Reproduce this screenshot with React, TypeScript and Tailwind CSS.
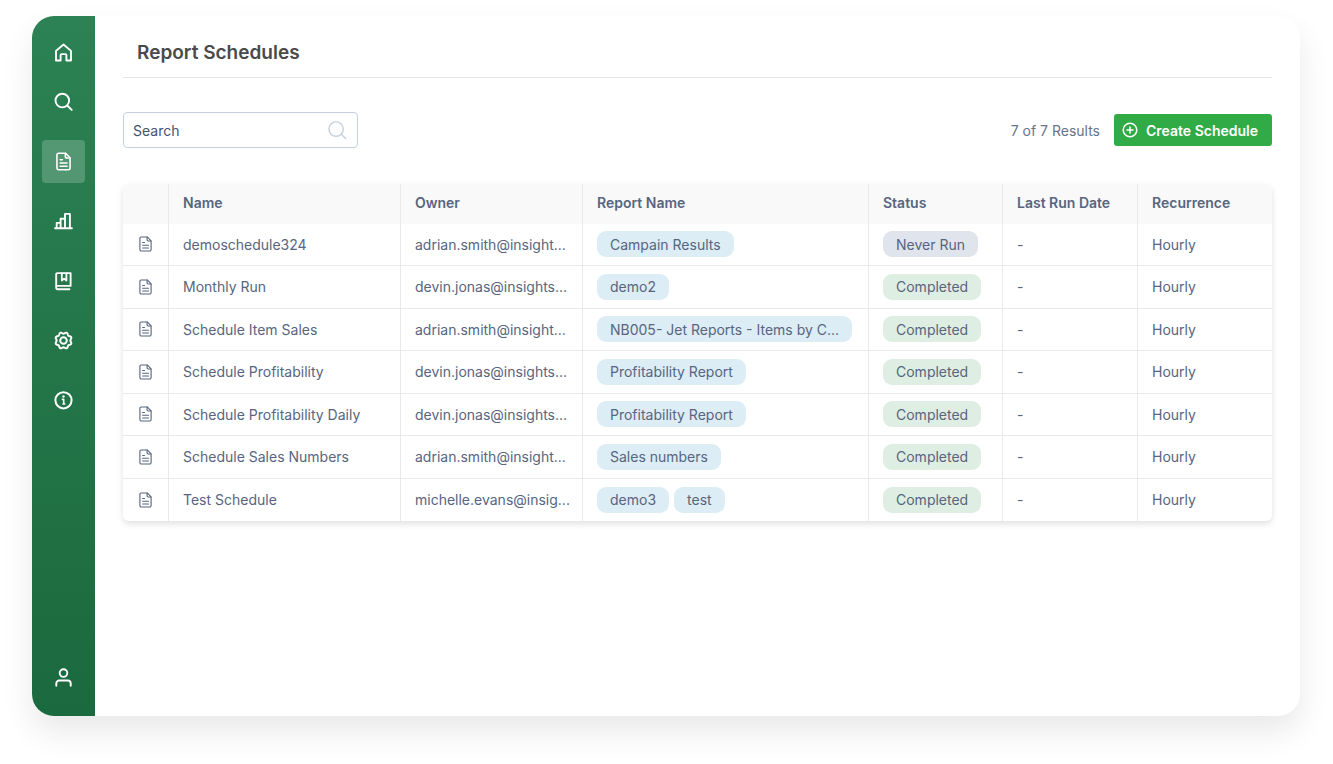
import type { ReactNode } from 'react';

type FileIconProps = { className?: string; stroke?: number };

function Svg({
  size = 'size-[19px]',
  stroke = 2,
  viewBox = '0.5 0.5 19 19',
  children,
}: {
  size?: string;
  stroke?: number;
  viewBox?: string;
  children: ReactNode;
}) {
  return (
    <svg
      className={`${size} shrink-0`}
      viewBox={viewBox}
      fill="none"
      stroke="currentColor"
      strokeWidth={stroke}
      strokeLinecap="round"
      strokeLinejoin="round"
      aria-hidden="true"
    >
      {children}
    </svg>
  );
}

function HomeIcon() {
  return (
    <Svg stroke={1.9}>
      <path d="M2.5 8.4 10 2l7.5 6.4v9.6h-4.6v-5.4a1 1 0 0 0-1-1H8.1a1 1 0 0 0-1 1V18H2.5z" />
    </Svg>
  );
}

function SearchIcon() {
  return (
    <Svg stroke={1.9}>
      <circle cx="8.8" cy="9.1" r="6.8" />
      <path d="m13.9 14.2 4.3 4.2" />
    </Svg>
  );
}

function FileIcon({ className = 'h-[19px] w-[15px]', stroke = 1.7 }: FileIconProps) {
  return (
    <svg
      className={`${className} shrink-0`}
      viewBox="0 0 16 20"
      fill="none"
      stroke="currentColor"
      strokeWidth={stroke}
      strokeLinecap="round"
      strokeLinejoin="round"
      aria-hidden="true"
    >
      <path d="M2.6 1.2h7.6L15 6v11a1.8 1.8 0 0 1-1.8 1.8H2.8A1.8 1.8 0 0 1 1 17V2.8a1.6 1.6 0 0 1 1.6-1.6z" />
      <path d="M10 1.4V5a1.2 1.2 0 0 0 1.2 1.2h3.6" />
      <path d="M4.4 8.1h2.4M4.4 11.6h7.4M4.4 15h7.4" />
    </svg>
  );
}

function ChartIcon() {
  return (
    <Svg stroke={1.9}>
      <path d="M1.6 16.8h16.8M3.2 16.7v-5.3h3.9v5.3M7.1 11.4V7.2h4.4v9.5M11.5 7.3V2.4h4.9v14.3" />
    </Svg>
  );
}

function BookIcon() {
  return (
    <Svg stroke={1.9}>
      <path d="M15.9 17.8H4.4a1.7 1.7 0 0 1-1.7-1.7V2.6a1 1 0 0 1 1-1h13.4v12.8H4.4" />
      <path d="M8.3 1.8v7.3l2.3-2 2.3 2V1.8" strokeWidth="1.8" />
    </Svg>
  );
}

const gearOutline = Array.from({ length: 96 }, (_, i) => {
  const angle = (i / 96) * Math.PI * 2;
  const radius = 7.6 - 0.75 * Math.cos(8 * angle);
  return `${(10 + radius * Math.cos(angle)).toFixed(2)},${(10 + radius * Math.sin(angle)).toFixed(2)}`;
}).join(' ');

function GearIcon() {
  return (
    <Svg stroke={2}>
      <polygon points={gearOutline} />
      <circle cx="10" cy="10" r="3.3" />
    </Svg>
  );
}

function InfoIcon() {
  return (
    <Svg>
      <circle cx="10" cy="9.8" r="8.1" />
      <path d="M8.9 8.9h1.3v4.5M9.4 13.5h1.8" strokeWidth="1.6" />
      <circle cx="10" cy="6" r="1.2" fill="currentColor" stroke="none" />
    </Svg>
  );
}

function UserIcon() {
  return (
    <Svg stroke={1.9}>
      <circle cx="10" cy="5.6" r="3.8" />
      <path d="M2.8 18.2v-2.3a2.9 2.9 0 0 1 2.9-2.9h8.6a2.9 2.9 0 0 1 2.9 2.9v2.3" />
    </Svg>
  );
}

function NavLink({ label, active, children }: { label: string; active?: boolean; children: ReactNode }) {
  return (
    <a
      href="#"
      aria-label={label}
      aria-current={active ? 'page' : undefined}
      className={`flex size-[43px] items-center justify-center rounded-[4px] ${active ? 'bg-white/20' : ''}`}
    >
      {children}
    </a>
  );
}

function Sidebar() {
  return (
    <nav
      aria-label="Main"
      className="flex w-[63px] shrink-0 flex-col items-center bg-linear-to-b from-[#2c8254] to-[#1b693e] pt-[15px] pb-[17px] text-white"
    >
      <div className="flex flex-col gap-1.5">
        <NavLink label="Home"><HomeIcon /></NavLink>
        <NavLink label="Search"><SearchIcon /></NavLink>
      </div>
      <div className="mt-[17px] flex h-[282px] flex-col justify-between">
        <NavLink label="Schedules" active><FileIcon /></NavLink>
        <NavLink label="Charts"><ChartIcon /></NavLink>
        <NavLink label="Library"><BookIcon /></NavLink>
        <NavLink label="Settings"><GearIcon /></NavLink>
        <NavLink label="Information"><InfoIcon /></NavLink>
      </div>
      <div className="mt-auto">
        <NavLink label="Account"><UserIcon /></NavLink>
      </div>
    </nav>
  );
}

const rows = [
  { name: 'demoschedule324', owner: 'adrian.smith@insight...', reports: ['Campain Results'], status: 'Never Run' },
  { name: 'Monthly Run', owner: 'devin.jonas@insights...', reports: ['demo2'], status: 'Completed' },
  { name: 'Schedule Item Sales', owner: 'adrian.smith@insight...', reports: ['NB005- Jet Reports - Items by C...'], status: 'Completed' },
  { name: 'Schedule Profitability', owner: 'devin.jonas@insights...', reports: ['Profitability Report'], status: 'Completed' },
  { name: 'Schedule Profitability Daily', owner: 'devin.jonas@insights...', reports: ['Profitability Report'], status: 'Completed' },
  { name: 'Schedule Sales Numbers', owner: 'adrian.smith@insight...', reports: ['Sales numbers'], status: 'Completed' },
  { name: 'Test Schedule', owner: 'michelle.evans@insig...', reports: ['demo3', 'test'], status: 'Completed' },
];

function Tag({ tone, children }: { tone: 'blue' | 'green' | 'gray'; children: ReactNode }) {
  const tones = { blue: 'bg-[#dcedf5]', green: 'bg-[#deeee2]', gray: 'bg-[#e0e4ed]' };
  return <span className={`flex h-[26px] items-center rounded-[9px] px-[13px] ${tones[tone]}`}>{children}</span>;
}

const cell = 'border-l border-[#e8e9ed] pl-3.5 pb-px text-left';

function ScheduleTable() {
  return (
    <div className="mt-9 overflow-hidden rounded-md shadow-[0_3px_6px_rgba(0,0,0,0.12)]">
      <table className="w-full table-fixed border-separate border-spacing-0 whitespace-nowrap text-[14px] text-[#57657f]">
        <colgroup>
          <col className="w-[45px]" />
          <col className="w-[232px]" />
          <col className="w-[182px]" />
          <col />
          <col className="w-[134px]" />
          <col className="w-[135px]" />
          <col className="w-[135px]" />
        </colgroup>
        <thead>
          <tr className="h-10 bg-[#f9f9f9]">
            <th scope="col" aria-label="Type" />
            {['Name', 'Owner', 'Report Name', 'Status', 'Last Run Date', 'Recurrence'].map((title) => (
              <th key={title} scope="col" className="border-l border-[#e8e9ed] pb-[3px] pl-3.5 text-left font-semibold">{title}</th>
            ))}
          </tr>
        </thead>
        <tbody className="[&>tr:not(:last-child)>td]:border-b">
          {rows.map((row) => (
            <tr key={row.name} className="h-[42px] even:h-[43px]">
              <td className="border-[#e8e9ed] pb-px">
                <div className="flex justify-center"><FileIcon className="h-4 w-[13px]" stroke={1.4} /></div>
              </td>
              <td className={cell}>{row.name}</td>
              <td className={cell}>{row.owner}</td>
              <td className={cell}>
                <div className="flex gap-[5px]">
                  {row.reports.map((report) => <Tag key={report} tone="blue">{report}</Tag>)}
                </div>
              </td>
              <td className={cell}>
                <div className="flex"><Tag tone={row.status === 'Completed' ? 'green' : 'gray'}>{row.status}</Tag></div>
              </td>
              <td className={cell}>-</td>
              <td className={cell}>Hourly</td>
            </tr>
          ))}
        </tbody>
      </table>
    </div>
  );
}

export default function App() {
  return (
    <div className="min-h-screen bg-white pt-4 pr-[33px] pb-12 pl-8 font-['Inter',sans-serif]">
      <div className="flex min-h-[700px] overflow-hidden rounded-[22px] bg-white shadow-[0_16px_32px_rgba(0,0,0,0.09)]">
        <Sidebar />
        <main className="min-w-0 flex-1 px-7">
          <header className="flex h-[62px] items-center border-b border-[#e6e6e8] px-3.5 pt-3.5">
            <h1 className="text-[19px] font-semibold text-[#4a4a4a]">Report Schedules</h1>
          </header>
          <div className="mt-[34px] flex items-center justify-between">
            <label className="flex h-9 w-[235px] items-center rounded-[4px] border border-[#c5d0de] pr-2.5 pl-[9px]">
              <input
                type="search"
                aria-label="Search"
                placeholder="Search"
                className="min-w-0 flex-1 text-[14px] outline-none placeholder:text-[#44546f]"
              />
              <span className="text-[#c5d0de]">
                <Svg stroke={1.4}>
                  <circle cx="8.6" cy="8.6" r="7.2" />
                  <path d="m13.8 13.8 4.3 4.3" />
                </Svg>
              </span>
            </label>
            <div className="flex items-center gap-3.5">
              <p className="text-[14px] text-[#66748c]">7 of 7 Results</p>
              <button type="button" className="flex h-8 items-center gap-2 rounded-[3px] bg-[#31ab46] pr-3.5 pl-2 text-[14px] font-semibold text-white">
                <Svg size="size-4" viewBox="0 0 16 16" stroke={1.5}>
                  <circle cx="8" cy="8" r="6.8" />
                  <path d="M8 5v6M5 8h6" />
                </Svg>
                Create Schedule
              </button>
            </div>
          </div>
          <ScheduleTable />
        </main>
      </div>
    </div>
  );
}
